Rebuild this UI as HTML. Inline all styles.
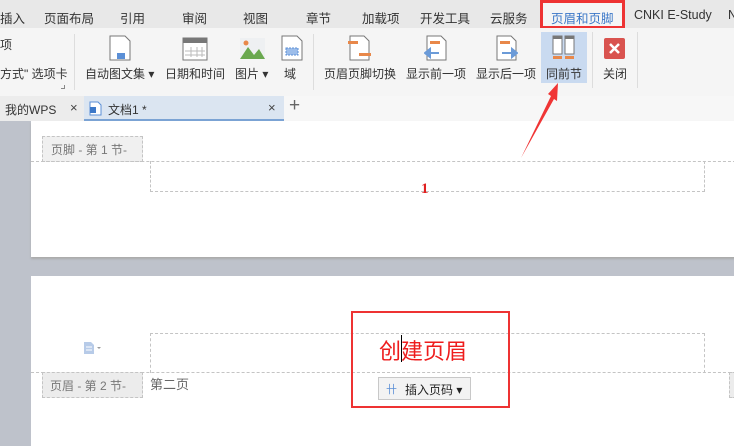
<!DOCTYPE html>
<html><head><meta charset="utf-8"><style>
*{margin:0;padding:0;box-sizing:border-box}
body{width:734px;height:435px;overflow:hidden;position:relative;background:#bec2cb;font-family:"Liberation Sans","Noto Sans CJK SC",sans-serif;font-size:12px;color:#333}
.a{position:absolute;white-space:nowrap}
.dash{position:absolute;border:1px dashed #c4c4c4}
</style></head><body>
<!-- top tab bar -->
<div class="a" style="left:0;top:0;width:734px;height:28px;background:#e8e8e8"></div>
<div class="a" style="top:8px;left:0;font-size:12.5px;color:#333">插入</div>
<div class="a" style="top:8px;left:44px;font-size:12.5px">页面布局</div>
<div class="a" style="top:8px;left:120px;font-size:12.5px">引用</div>
<div class="a" style="top:8px;left:182px;font-size:12.5px">审阅</div>
<div class="a" style="top:8px;left:243px;font-size:12.5px">视图</div>
<div class="a" style="top:8px;left:306px;font-size:12.5px">章节</div>
<div class="a" style="top:8px;left:362px;font-size:12.5px">加载项</div>
<div class="a" style="top:8px;left:420px;font-size:12.5px">开发工具</div>
<div class="a" style="top:8px;left:490px;font-size:12.5px">云服务</div>
<div class="a" style="left:540px;top:0;width:85px;height:29px;background:#f5f5f5;border:3px solid #ee3333"></div>
<div class="a" style="top:8px;left:551px;font-size:12.5px;color:#3c78c8">页眉和页脚</div>
<div class="a" style="top:8px;left:634px;font-size:12.5px">CNKI E-Study</div>
<div class="a" style="top:8px;left:728px;font-size:12.5px">N</div>
<!-- ribbon -->
<div class="a" style="left:0;top:28px;width:734px;height:68px;background:#f5f5f5"></div>
<div class="a" style="top:36px;left:0;font-size:12px">项</div>
<div class="a" style="top:65px;left:0;font-size:12px">方式" 选项卡</div>
<div class="a" style="top:85px;left:61px;width:4px;height:4px;border-right:1px solid #888;border-bottom:1px solid #888"></div>
<div class="a" style="left:74px;top:34px;width:1px;height:56px;background:#ddd"></div>
<div class="a" style="left:313px;top:34px;width:1px;height:56px;background:#ddd"></div>
<div class="a" style="left:232px;top:32px;width:1px;height:58px;background:transparent"></div>
<!-- icons -->
<svg class="a" style="left:108px;top:35px" width="24" height="26"><path d="M2 1h15l5 5v19H2z" fill="#fff" stroke="#777"/><rect x="9" y="18" width="8" height="6" fill="#5b8fd6"/></svg>
<svg class="a" style="left:182px;top:35px" width="26" height="26"><rect x="1" y="3" width="24" height="22" fill="#fff" stroke="#777"/><rect x="1" y="3" width="24" height="5" fill="#777"/><path d="M9 12v10M15 12v10M20 12v10M3 16h20M3 20h20" stroke="#bbb"/></svg>
<svg class="a" style="left:240px;top:38px" width="25" height="21"><rect width="25" height="21" fill="#eef0f2"/><circle cx="6" cy="5" r="2.5" fill="#e8884a"/><path d="M0 21L8 9l6 8 5-6 6 10z" fill="#6aa84f"/></svg>
<svg class="a" style="left:281px;top:35px" width="22" height="26"><path d="M1 1h15l5 5v19H1z" fill="#fff" stroke="#777"/><rect x="5" y="13" width="12" height="7" fill="#9cbdea" stroke="#5b8fd6" stroke-dasharray="2 1"/></svg>
<svg class="a" style="left:347px;top:35px" width="24" height="26"><path d="M3 1h14l5 5v19H3z" fill="#fff" stroke="#777"/><rect x="1" y="6" width="10" height="3" fill="#e8884a"/><rect x="12" y="18" width="12" height="3" fill="#e8884a"/></svg>
<svg class="a" style="left:424px;top:35px" width="24" height="26"><path d="M3 1h14l5 5v19H3z" fill="#fff" stroke="#777"/><rect x="6" y="6" width="10" height="3" fill="#e8884a"/><path d="M1 18l5-4v8z M5 18h10" fill="#6b9bd8" stroke="#6b9bd8" stroke-width="2"/></svg>
<svg class="a" style="left:494px;top:35px" width="24" height="26"><path d="M3 1h14l5 5v19H3z" fill="#fff" stroke="#777"/><rect x="6" y="6" width="10" height="3" fill="#e8884a"/><path d="M23 18l-5-4v8z M8 18h10" fill="#6b9bd8" stroke="#6b9bd8" stroke-width="2"/></svg>
<div class="a" style="left:541px;top:32px;width:46px;height:51px;background:#c9daf0"></div>
<svg class="a" style="left:552px;top:35px" width="24" height="25"><rect x="1" y="1" width="9" height="18" fill="#fff" stroke="#777"/><rect x="13" y="1" width="9" height="18" fill="#fff" stroke="#777"/><rect x="1" y="1" width="9" height="3" fill="#777"/><rect x="13" y="1" width="9" height="3" fill="#777"/><rect x="1" y="21" width="9" height="3" fill="#e8884a"/><rect x="13" y="21" width="9" height="3" fill="#e8884a"/></svg>
<div class="a" style="left:592px;top:32px;width:1px;height:56px;background:#ddd"></div>
<div class="a" style="left:637px;top:32px;width:1px;height:56px;background:#ddd"></div>
<svg class="a" style="left:604px;top:38px" width="21" height="21"><rect width="21" height="21" rx="2" fill="#d9534f"/><path d="M6 6l9 9M15 6l-9 9" stroke="#fff" stroke-width="2.5"/></svg>
<div class="a" style="top:65px;left:85px">自动图文集 ▾</div>
<div class="a" style="top:65px;left:165px">日期和时间</div>
<div class="a" style="top:65px;left:235px">图片 ▾</div>
<div class="a" style="top:65px;left:284px">域</div>
<div class="a" style="top:65px;left:324px">页眉页脚切换</div>
<div class="a" style="top:65px;left:406px">显示前一项</div>
<div class="a" style="top:65px;left:476px">显示后一项</div>
<div class="a" style="top:65px;left:546px">同前节</div>
<div class="a" style="top:65px;left:603px">关闭</div>
<!-- doc tabs -->
<div class="a" style="left:0;top:96px;width:734px;height:25px;background:#f7f7f7"></div>
<div class="a" style="left:0;top:96px;width:84px;height:25px;background:#ececec"></div>
<div class="a" style="top:101px;left:5px">我的WPS</div>
<div class="a" style="top:100px;left:70px;font-size:13px;color:#444">×</div>
<div class="a" style="left:84px;top:96px;width:200px;height:25px;background:#dbe5f1;border-bottom:2px solid #7ba3d4"></div>
<svg class="a" style="left:89px;top:101px" width="13" height="15"><path d="M1 1h8l3 3v10H1z" fill="#fff" stroke="#5b8fd6"/><rect x="1" y="6" width="6" height="6" fill="#3c78c8"/></svg>
<div class="a" style="top:101px;left:108px">文档1 *</div>
<div class="a" style="top:100px;left:268px;font-size:13px;color:#444">×</div>
<div class="a" style="top:95px;left:289px;font-size:19px;color:#666">+</div>
<!-- page 1 -->
<div class="a" style="left:31px;top:121px;width:710px;height:136px;background:#fff;box-shadow:0 2px 2px #aaa"></div>
<div class="dash" style="left:42px;top:136px;width:101px;height:26px;background:#f0f0f0"></div>
<div class="a" style="top:141px;left:51px;color:#777">页脚 - 第 1 节-</div>
<div class="a" style="left:31px;top:161px;width:710px;border-top:1px dashed #c4c4c4"></div>
<div class="dash" style="left:150px;top:161px;width:555px;height:31px;border-top:none"></div>
<div class="a" style="top:181px;left:421px;color:#e02020;font-weight:bold;font-family:'Liberation Serif',serif;font-size:15px">1</div>
<!-- page 2 -->
<div class="a" style="left:31px;top:276px;width:710px;height:170px;background:#fff"></div>
<div class="dash" style="left:150px;top:333px;width:555px;height:40px;border-bottom:none"></div>
<div class="a" style="left:31px;top:372px;width:710px;border-top:1px dashed #c4c4c4"></div>
<div class="dash" style="left:42px;top:372px;width:60px;height:26px;background:#ececec"></div>
<div class="a" style="top:377px;left:50px;color:#777">页眉 - 第 2 节-</div>
<div class="dash" style="left:42px;top:372px;width:101px;height:26px;background:#ececec"></div>
<div class="a" style="top:377px;left:50px;color:#777">页眉 - 第 2 节-</div>
<div class="a" style="top:374px;left:150px;font-size:13px;color:#666">第二页</div>
<svg class="a" style="left:83px;top:341px" width="25" height="14"><path d="M1 1h7l3 3v9H1z" fill="#b7cbe8"/><path d="M3 6h6M3 9h6" stroke="#fff"/><path d="M14 6l2 2 2-2z" fill="#999"/></svg>
<div class="a" style="left:351px;top:311px;width:159px;height:97px;border:2px solid #ee3333"></div>
<div class="a" style="top:334px;left:379px;font-size:22px;color:#ee1c1c">创建页眉</div>
<div class="a" style="left:401px;top:335px;width:1px;height:27px;background:#000"></div>
<div class="a" style="left:378px;top:377px;width:93px;height:23px;background:#f3f3f3;border:1px solid #c8c8c8"></div>
<div class="a" style="top:381px;left:386px;font-size:11px;color:#5b8fd6">卄</div>
<div class="a" style="top:381px;left:405px;font-size:12px;color:#222">插入页码 ▾</div>
<div class="a" style="left:729px;top:372px;width:10px;height:26px;border:1px dashed #c4c4c4;background:#ececec"></div>
<!-- arrow -->
<svg class="a" style="left:520px;top:82px" width="40" height="78"><path d="M38 1L28 12 31 14 1 76 34 17 37 19z" fill="#f03535"/></svg>
</body></html>
